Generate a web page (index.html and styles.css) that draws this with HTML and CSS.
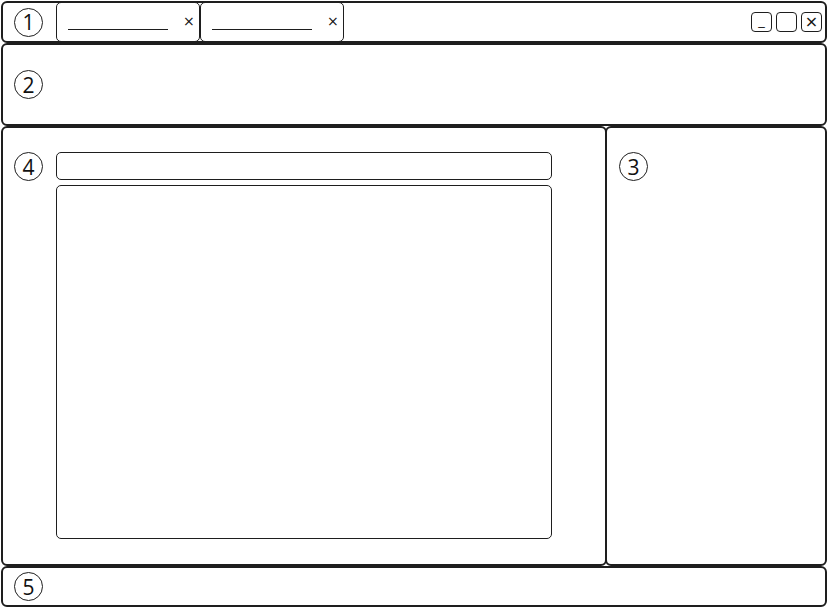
FILE: index.html
```html
<!DOCTYPE html>
<html>
<head>
<meta charset="utf-8">
<link rel="stylesheet" href="styles.css">
</head>
<body>
<div class="app">
  <div class="box titlebar">
    <div class="num">1</div>
    <div class="tabs">
      <div class="tab"><span class="tab-line"></span><span class="tab-x">×</span></div>
      <div class="tab"><span class="tab-line"></span><span class="tab-x">×</span></div>
    </div>
    <div class="win-btns">
      <div class="win-btn"><span class="min">_</span></div>
      <div class="win-btn"></div>
      <div class="win-btn"><span class="close">×</span></div>
    </div>
  </div>
  <div class="box toolbar">
    <div class="num">2</div>
  </div>
  <div class="middle">
    <div class="box main">
      <div class="num">4</div>
      <div class="editor">
        <div class="input"></div>
        <div class="textarea"></div>
      </div>
    </div>
    <div class="box side">
      <div class="num">3</div>
    </div>
  </div>
  <div class="box footer">
    <div class="num">5</div>
  </div>
</div>
</body>
</html>
```

FILE: styles.css
```css
* { box-sizing: border-box; }
html, body {
  margin: 0;
  padding: 0;
  background: #ffffff;
  font-family: "Open Sans", "Noto Sans", "DejaVu Sans", sans-serif;
  color: #111111;
}
.app {
  width: 828px;
  height: 608px;
  padding: 1px 1px 0 1px;
  display: flex;
  flex-direction: column;
}
.box {
  border: 2px solid #1e1e1e;
  border-radius: 6px;
  background: #fff;
}
.num {
  width: 29px;
  height: 29px;
  flex: none;
  border: 1px solid #1e1e1e;
  border-radius: 50%;
  display: flex;
  align-items: center;
  justify-content: center;
  font-size: 21px;
  line-height: 1;
  padding-top: 1px;
  color: #111;
}
.titlebar {
  height: 42px;
  display: flex;
  align-items: center;
  padding: 0 3px 0 11px;
  width: 826px;
}
.tabs {
  display: flex;
  align-self: stretch;
  margin: -1px 0 -1px 13px;
}
.tab {
  width: 144px;
  border: 1px solid #1e1e1e;
  border-radius: 5px;
  display: flex;
  align-items: center;
  padding: 0 0 0 11px;
}
.tab-line {
  width: 100px;
  height: 1px;
  background: #1e1e1e;
  margin-top: 14px;
}
.tab-x {
  font-family: "DejaVu Sans", sans-serif;
  font-size: 14px;
  margin-left: 15px;
  margin-top: -2px;
  color: #111;
}
.win-btns {
  margin-left: auto;
  display: flex;
  gap: 4px;
}
.win-btn {
  width: 21px;
  height: 20px;
  border: 1px solid #1e1e1e;
  border-radius: 4px;
  display: flex;
  align-items: center;
  justify-content: center;
}
.win-btn .min {
  font-family: "DejaVu Sans", sans-serif;
  font-size: 13px;
  line-height: 1;
  margin-top: -3px;
}
.win-btn .close {
  font-family: "DejaVu Sans", sans-serif;
  font-size: 16px;
  line-height: 1;
  margin-top: -1px;
}
.toolbar {
  height: 83px;
  display: flex;
  align-items: center;
  padding-left: 11px;
  width: 826px;
}
.middle {
  height: 440px;
  display: flex;
  width: 826px;
}
.main {
  width: 606px;
  display: flex;
  padding: 24px 0 0 11px;
}
.editor {
  margin-left: 13px;
  display: flex;
  flex-direction: column;
  gap: 5px;
}
.input {
  width: 496px;
  height: 28px;
  border: 1px solid #1e1e1e;
  border-radius: 5px;
}
.textarea {
  width: 496px;
  height: 354px;
  border: 1px solid #1e1e1e;
  border-radius: 5px;
}
.side {
  width: 222px;
  margin-left: -2px;
  padding: 24px 0 0 12px;
}
.footer {
  height: 41px;
  display: flex;
  align-items: center;
  padding-left: 11px;
  width: 826px;
}
```
